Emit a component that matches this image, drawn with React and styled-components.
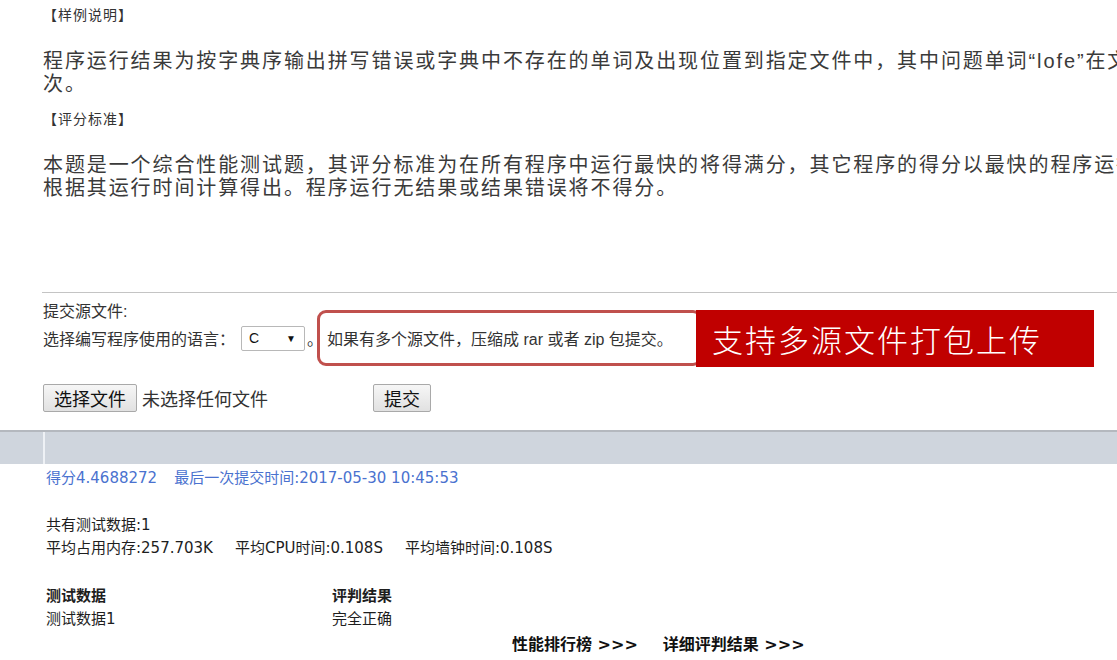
import React from 'react';
import styled, { createGlobalStyle } from 'styled-components';

const GlobalStyle = createGlobalStyle`
  html, body {
    margin: 0;
    padding: 0;
    background: #ffffff;
    overflow: hidden;
  }
  body {
    font-family: "Liberation Sans", "Noto Sans CJK SC", sans-serif;
    color: #333333;
  }
`;

const Page = styled.div`
  width: 1117px;
  height: 660px;
  overflow: hidden;
`;

const Problem = styled.div`
  padding: 5px 0 0 43px;
`;

const SectionTitle = styled.div`
  font-size: 14px;
  line-height: 20px;
  letter-spacing: 1px;
  margin-bottom: 25px;
  color: #333333;
`;

const Paragraph = styled.p`
  margin: 0 0 13px;
  font-size: 20px;
  line-height: 23px;
  letter-spacing: 1.9px;
  white-space: nowrap;
  color: #3a3a3a;
`;

const SubmitPanel = styled.div`
  margin: 92px 0 0 42px;
  padding: 9px 0 0 1px;
  border-top: 1px solid #c4c4c4;
`;

const SubmitTitle = styled.div`
  font-size: 16px;
  line-height: 20px;
  color: #333333;
`;

const LangRow = styled.div`
  display: flex;
  align-items: center;
  height: 26px;
  margin-top: 3px;
  font-size: 16px;
  color: #333333;
`;

const Select = styled.div`
  box-sizing: border-box;
  width: 64px;
  height: 25px;
  margin-left: 6px;
  padding: 0 8px 0 7px;
  display: flex;
  align-items: center;
  justify-content: space-between;
  border: 1px solid #b8b8b8;
  border-radius: 2px;
  background: #ffffff;
  font-size: 14px;
  color: #111111;
`;

const Arrow = styled.span`
  font-size: 10px;
  color: #111111;
`;

const Dot = styled.span`
  width: 10px;
  margin-left: 2px;
  overflow: visible;
  white-space: nowrap;
`;

const Callout = styled.div`
  display: flex;
  align-items: center;
`;

const NoteBox = styled.div`
  box-sizing: border-box;
  width: 385px;
  height: 56px;
  padding-left: 7px;
  display: flex;
  align-items: center;
  border: 3px solid #c0504d;
  border-radius: 9px;
  font-size: 16px;
  color: #333333;
  white-space: nowrap;
`;

const Badge = styled.div`
  box-sizing: border-box;
  width: 398px;
  height: 57px;
  margin-left: -6px;
  padding-left: 16px;
  display: flex;
  align-items: center;
  background: #c00000;
  color: #ffffff;
  font-size: 31px;
  font-weight: 300;
  letter-spacing: 2px;
`;

const FileRow = styled.div`
  display: flex;
  align-items: center;
  height: 28px;
  margin-top: 33px;
`;

const Button = styled.button`
  height: 28px;
  padding: 0 10px;
  border: 1px solid #a9a9a9;
  border-radius: 2px;
  background: linear-gradient(#f6f6f6, #e1e1e1);
  font-family: "Noto Sans CJK SC", sans-serif;
  font-size: 18px;
  line-height: 26px;
  color: #111111;
`;

const FileName = styled.span`
  box-sizing: border-box;
  width: 236px;
  padding-left: 5px;
  font-size: 18px;
  color: #333333;
`;

const ResultBar = styled.div`
  display: grid;
  grid-template-columns: 43px 1fr;
  height: 32px;
  margin-top: 18px;
  border-top: 2px solid #b4b8be;
  background: #cfd5dd;
`;

const BarCell = styled.div`
  border-left: ${(p) => (p.$divider ? '2px solid #eef1f5' : 'none')};
`;

const Results = styled.div`
  padding: 3px 0 0 46px;
  font-family: "DejaVu Sans", "Noto Sans CJK SC", sans-serif;
  font-size: 15px;
  line-height: 23px;
  color: #1e1e1e;
  white-space: nowrap;
`;

const ScoreLine = styled.div`
  display: flex;
  gap: 17px;
  color: #4a72cf;
`;

const Stats = styled.div`
  margin-top: 24px;
`;

const StatsRow = styled.div`
  display: flex;
  gap: 22px;
`;

const Table = styled.div`
  display: grid;
  grid-template-columns: 286px 1fr;
  margin-top: 25px;
`;

const Cell = styled.div`
  font-weight: ${(p) => (p.$head ? 'bold' : 'normal')};
`;

const Links = styled.div`
  display: flex;
  gap: 25px;
  margin-top: 2px;
  padding-left: 466px;
  font-size: 16px;
  font-weight: bold;
  color: #111111;
`;

export default function App() {
  return (
    <Page>
      <GlobalStyle />
      <Problem>
        <SectionTitle>【样例说明】</SectionTitle>
        <Paragraph>
          程序运行结果为按字典序输出拼写错误或字典中不存在的单词及出现位置到指定文件中，其中问题单词“lofe”在文件中共出现了2
          <br />
          次。
        </Paragraph>
        <SectionTitle>【评分标准】</SectionTitle>
        <Paragraph>
          本题是一个综合性能测试题，其评分标准为在所有程序中运行最快的将得满分，其它程序的得分以最快的程序运行时间为基准，
          <br />
          根据其运行时间计算得出。程序运行无结果或结果错误将不得分。
        </Paragraph>
      </Problem>

      <SubmitPanel>
        <SubmitTitle>提交源文件:</SubmitTitle>
        <LangRow>
          选择编写程序使用的语言：
          <Select>
            C<Arrow>▼</Arrow>
          </Select>
          <Dot>。</Dot>
          <Callout>
            <NoteBox>如果有多个源文件，压缩成 rar 或者 zip 包提交。</NoteBox>
            <Badge>支持多源文件打包上传</Badge>
          </Callout>
        </LangRow>
        <FileRow>
          <Button>选择文件</Button>
          <FileName>未选择任何文件</FileName>
          <Button>提交</Button>
        </FileRow>
      </SubmitPanel>

      <ResultBar>
        <BarCell />
        <BarCell $divider />
      </ResultBar>

      <Results>
        <ScoreLine>
          <span>得分4.4688272</span>
          <span>最后一次提交时间:2017-05-30 10:45:53</span>
        </ScoreLine>
        <Stats>
          <div>共有测试数据:1</div>
          <StatsRow>
            <span>平均占用内存:257.703K</span>
            <span>平均CPU时间:0.108S</span>
            <span>平均墙钟时间:0.108S</span>
          </StatsRow>
        </Stats>
        <Table>
          <Cell $head>测试数据</Cell>
          <Cell $head>评判结果</Cell>
          <Cell>测试数据1</Cell>
          <Cell>完全正确</Cell>
        </Table>
        <Links>
          <span>性能排行榜 &gt;&gt;&gt;</span>
          <span>详细评判结果 &gt;&gt;&gt;</span>
        </Links>
      </Results>
    </Page>
  );
}
